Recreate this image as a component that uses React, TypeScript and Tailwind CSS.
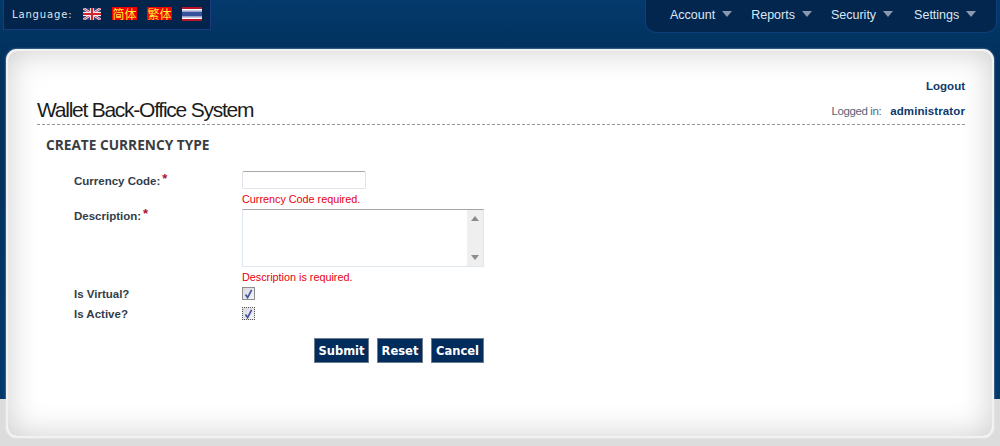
const sans = "font-['Liberation_Sans',Arial,sans-serif]";

function UkFlag() {
  return (
    <svg width="18" height="12" viewBox="0 0 18 12" aria-hidden="true">
      <rect width="18" height="12" fill="#2b3a78" />
      <path d="M0 0L18 12M18 0L0 12" stroke="#e8e0e4" strokeWidth="2.6" />
      <path d="M0 0L18 12M18 0L0 12" stroke="#c23a4a" strokeWidth="0.9" />
      <path d="M9 0V12M0 6H18" stroke="#f2eef0" strokeWidth="4" />
      <path d="M9 0V12M0 6H18" stroke="#d32630" strokeWidth="2.2" />
    </svg>
  );
}

function ThaiFlag() {
  return (
    <svg width="20" height="14" viewBox="0 0 20 14" aria-hidden="true">
      <rect width="20" height="14" fill="#ffffff" />
      <rect width="20" height="2" fill="#b5142c" />
      <rect y="12" width="20" height="2" fill="#b5142c" />
      <rect y="4.5" width="20" height="5" fill="#3a4f9e" />
      <rect y="3" width="20" height="1" fill="#c4c8da" />
      <rect y="10" width="20" height="1" fill="#c4c8da" />
    </svg>
  );
}

function CnFlag({ text }: { text: string }) {
  return (
    <span className="flex h-[13px] w-[25px] items-center justify-center bg-[#f00000] font-['Noto_Sans_CJK_SC',sans-serif] text-[12px] leading-[13px] text-[#ffee33]">
      {text}
    </span>
  );
}

function NavItem({ label, className = "" }: { label: string; className?: string }) {
  return (
    <div className={`flex items-center gap-[7px] ${className}`}>
      <span className={`${sans} text-[12.5px] leading-[15px] text-[#dbe8f4]`}>{label}</span>
      <svg width="10" height="6" viewBox="0 0 10 6" className="mb-[2px]" aria-hidden="true">
        <path d="M0 0H10L5 6Z" fill="#8a99ab" />
      </svg>
    </div>
  );
}

function Check({ focused }: { focused?: boolean }) {
  return (
    <span
      className={`flex h-[13px] w-[13px] items-center justify-center border bg-gradient-to-br from-[#d8d8de] to-[#f6f6f8] ${
        focused ? "border-dotted border-[#555]" : "border-[#8e8e8e]"
      }`}
    >
      <svg width="9" height="10" viewBox="0 0 9 10" aria-hidden="true">
        <path d="M1.5 5.5L3.6 8.6L7.6 0.8" fill="none" stroke="#44549f" strokeWidth="1.7" />
      </svg>
    </span>
  );
}

function Label({ text, star }: { text: string; star?: boolean }) {
  return (
    <div className={`${sans} w-[196px] pl-[28px] text-[11.5px] font-bold leading-[14px] text-[#333d4a]`}>
      {text}
      {star && <span className="relative top-[-2px] ml-[2px] text-[13px] font-bold text-[#b01030]">*</span>}
    </div>
  );
}

function Btn({ text, width }: { text: string; width: string }) {
  return (
    <button
      type="button"
      className={`${width} h-[25px] border border-[#6d7c8a] bg-[#022c5c] text-center font-['DejaVu_Sans',sans-serif] text-[11.5px] font-bold leading-[22px] text-white`}
    >
      {text}
    </button>
  );
}

export default function App() {
  return (
    <div className="flex h-[446px] w-[1000px] flex-col overflow-hidden bg-[linear-gradient(to_bottom,#043a6c_0,#02325f_48px,#023360_200px,#023a6c_399px,#dcdcdc_399px,#dcdcdc_100%)]">
      <header className="flex h-[33px] items-start justify-between pl-[3px] pr-[3px]">
        <div className="flex h-[30px] w-[208px] items-center border-x border-b border-[#1c3a80] bg-[#03254c] pb-[2px] pl-[8px]">
          <span className="relative top-[1px] w-[71px] font-['DejaVu_Sans',sans-serif] text-[10px] tracking-[0.85px] text-[#dfe6ee]">Language:</span>
          <div className="flex items-center">
            <UkFlag />
            <span className="w-[11px]" />
            <CnFlag text="简体" />
            <span className="w-[10px]" />
            <CnFlag text="繁体" />
            <span className="w-[10px]" />
            <ThaiFlag />
          </div>
        </div>
        <nav className="flex h-[33px] w-[352px] items-center gap-[19px] rounded-b-[11px] border-x border-b border-[#0a3f78] bg-[#03264f] pb-[2px] pl-[24px]">
          <NavItem label="Account" />
          <NavItem label="Reports" />
          <NavItem label="Security" />
          <NavItem label="Settings" className="ml-[2px]" />
        </nav>
      </header>

      <main className="mx-[6px] mt-[16px] h-[389px] rounded-[11px] border-2 border-[#f2f2f2] bg-white pl-[29px] pr-[27px] shadow-[inset_0_0_32px_rgba(0,0,0,0.2),0_0_2px_rgba(255,255,255,0.7)]">
        <div className="border-b border-dashed border-[#999] pb-[2px] pt-[28px]">
          <div className={`${sans} h-[17px] text-right text-[11.5px] font-bold leading-[15px] text-[#0d3a6c]`}>Logout</div>
          <div className="mt-[1px] flex items-end justify-between">
            <h1 className={`${sans} pt-[1px] text-[21px] font-normal leading-[24px] tracking-[-1.25px] text-[#1c1c1c]`}>
              Wallet Back-Office System
            </h1>
            <div className={`${sans} mb-[4px] flex items-baseline gap-[9px] text-[11.5px] leading-[14px]`}>
              <span className="tracking-[-0.4px] text-[#56657a]">Logged in:</span>
              <span className="font-bold tracking-[0.1px] text-[#0d3a6c]">administrator</span>
            </div>
          </div>
        </div>

        <h2 className="mt-[11px] pl-[9px] font-['Open_Sans',sans-serif] text-[13.7px] font-bold leading-[18px] text-[#3a3d42]">
          CREATE CURRENCY TYPE
        </h2>

        <form className="pl-[9px]">
          <div className="mt-[17px] flex">
            <div className="pt-[3px]"><Label text="Currency Code:" star /></div>
            <div>
              <div className="h-[18px] w-[124px] rounded-[2px] border border-[#dfe3ea] border-t-[#a9a9a9] bg-white" />
              <div className={`${sans} mt-[3px] h-[17px] text-[10.8px] leading-[14px] text-[#e8000e]`}>Currency Code required.</div>
            </div>
          </div>
          <div className="flex">
            <div><Label text="Description:" star /></div>
            <div>
              <div className="flex h-[58px] w-[242px] border border-[#dfe6ee] border-t-[#a5a5a5] bg-white">
                <div className="flex-1" />
                <div className="flex w-[16px] flex-col items-center justify-between bg-[#efefef] py-[6px]">
                  <svg width="8" height="5" viewBox="0 0 8 5" aria-hidden="true"><path d="M0 5H8L4 0Z" fill="#8c8c8c" /></svg>
                  <svg width="8" height="5" viewBox="0 0 8 5" aria-hidden="true"><path d="M0 0H8L4 5Z" fill="#8c8c8c" /></svg>
                </div>
              </div>
              <div className={`${sans} mt-[3px] h-[15px] text-[10.8px] leading-[15px] text-[#e8000e]`}>Description is required.</div>
            </div>
          </div>
          <div className="mt-[2px] flex h-[20px] items-start">
            <Label text="Is Virtual?" />
            <Check />
          </div>
          <div className="flex h-[20px] items-start">
            <Label text="Is Active?" />
            <Check focused />
          </div>
          <div className="ml-[268px] mt-[11px] flex gap-[8px]">
            <Btn text="Submit" width="w-[55px]" />
            <Btn text="Reset" width="w-[46px]" />
            <Btn text="Cancel" width="w-[53px]" />
          </div>
        </form>
      </main>
    </div>
  );
}
